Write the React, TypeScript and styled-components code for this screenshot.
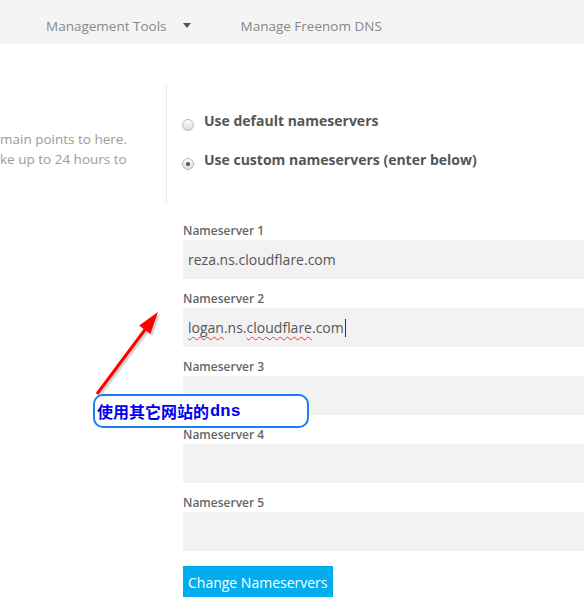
import React from "react";
import styled, { createGlobalStyle } from "styled-components";

const Global = createGlobalStyle`
  html, body { margin: 0; padding: 0; background: #fff; overflow: hidden; }
  body { font-family: "Open Sans", "Liberation Sans", sans-serif; }
`;

const Page = styled.div`
  position: relative;
  width: 584px;
  height: 597px;
  overflow: hidden;
`;

const NavBar = styled.nav`
  height: 44px;
  box-sizing: border-box;
  padding: 7px 0 0 46px;
  background: #f4f4f4;
  display: flex;
  align-items: center;
  font-size: 13.5px;
  color: #888;
`;

const NavItem = styled.span<{ $gap?: number }>`
  display: flex;
  align-items: center;
  margin-right: ${(p) => p.$gap ?? 0}px;
  white-space: nowrap;
`;

const Caret = styled.span`
  display: inline-block;
  margin-left: 16px;
  width: 0;
  height: 0;
  border-left: 4px solid transparent;
  border-right: 4px solid transparent;
  border-top: 5px solid #555;
`;

const Main = styled.div`
  padding-top: 41px;
`;

const TopRow = styled.div`
  display: flex;
`;

const Intro = styled.div`
  width: 167px;
  height: 118px;
  box-sizing: border-box;
  border-right: 1px solid #e8e8e8;
  padding-top: 44px;
  font-size: 13.5px;
  line-height: 20px;
  color: #9b9b9b;
  white-space: nowrap;
`;

const Options = styled.div`
  padding: 26px 0 0 15px;
  display: flex;
  flex-direction: column;
  gap: 19px;
`;

const RadioRow = styled.label`
  display: flex;
  align-items: flex-start;
  font-size: 14px;
  line-height: 20px;
  font-weight: 700;
  color: #555;
  white-space: nowrap;
`;

const Radio = styled.span<{ $checked?: boolean }>`
  position: relative;
  width: 12px;
  height: 12px;
  margin-top: 8px;
  margin-right: 10px;
  box-sizing: border-box;
  border-radius: 50%;
  border: 1px solid #b9b9b9;
  background: linear-gradient(#fdfdfd, #dcdcdc);
  &::after {
    content: "";
    display: ${(p) => (p.$checked ? "block" : "none")};
    position: absolute;
    left: 3px;
    top: 3px;
    width: 4px;
    height: 4px;
    border-radius: 50%;
    background: #555;
  }
`;

const Fields = styled.div`
  margin: 19px 0 0 183px;
  display: flex;
  flex-direction: column;
  gap: 11px;
`;

const Field = styled.div`
  display: flex;
  flex-direction: column;
`;

const Label = styled.div`
  font-size: 12px;
  line-height: 18px;
  font-weight: 600;
  color: #666;
`;

const InputBox = styled.div`
  width: 500px;
  height: 39px;
  box-sizing: border-box;
  background: #f2f2f2;
  padding-left: 5px;
  display: flex;
  align-items: center;
  font-size: 14px;
  color: #555;
  white-space: nowrap;
`;

const Misspelled = styled.span`
  text-decoration: underline wavy #e33;
  text-decoration-thickness: 1px;
  text-underline-offset: 3px;
`;

const Cursor = styled.span`
  display: inline-block;
  width: 1px;
  height: 18px;
  background: #333;
  margin-left: 1px;
`;

const Button = styled.button`
  margin: 15px 0 0 183px;
  height: 33px;
  padding: 0 5px;
  border: none;
  background: #00adef;
  color: #fff;
  font-family: "Open Sans", "Liberation Sans", sans-serif;
  font-size: 14px;
  display: block;
`;

const ArrowSvg = styled.svg`
  position: absolute;
  left: 0;
  top: 0;
  pointer-events: none;
`;

const Callout = styled.div`
  position: absolute;
  left: 93px;
  top: 394px;
  width: 216px;
  height: 34px;
  box-sizing: border-box;
  border: 2px solid #1a7ff0;
  border-radius: 10px;
  background: #fff;
  padding-left: 2px;
  display: flex;
  align-items: center;
  font-family: "Noto Sans CJK SC", "Liberation Serif", serif;
  font-weight: 700;
  font-size: 16px;
  color: #0000f0;
  white-space: nowrap;
`;

const Latin = styled.span`
  font-family: "Liberation Mono", "DejaVu Sans Mono", monospace;
  font-size: 17px;
  font-weight: 700;
  margin-left: 1px;
`;

const servers = ["reza.ns.cloudflare.com", "logan", "", "", ""];

export default function App() {
  return (
    <Page>
      <Global />
      <NavBar>
        <NavItem $gap={50}>
          Management Tools
          <Caret />
        </NavItem>
        <NavItem>Manage Freenom DNS</NavItem>
      </NavBar>
      <Main>
        <TopRow>
          <Intro>
            main points to here.
            <br />
            ke up to 24 hours to
          </Intro>
          <Options>
            <RadioRow>
              <Radio />
              Use default nameservers
            </RadioRow>
            <RadioRow>
              <Radio $checked />
              Use custom nameservers (enter below)
            </RadioRow>
          </Options>
        </TopRow>
        <Fields>
          {servers.map((s, i) => (
            <Field key={i}>
              <Label>Nameserver {i + 1}</Label>
              <InputBox>
                {i === 1 ? (
                  <>
                    <Misspelled>logan</Misspelled>.ns.<Misspelled>cloudflare</Misspelled>.com
                    <Cursor />
                  </>
                ) : (
                  s
                )}
              </InputBox>
            </Field>
          ))}
        </Fields>
        <Button>Change Nameservers</Button>
      </Main>
      <ArrowSvg width="584" height="597" viewBox="0 0 584 597">
        <g opacity="0.25" transform="translate(2 2)">
          <line x1="97" y1="394" x2="147" y2="327" stroke="#555" strokeWidth="3" />
          <polygon points="158,312 150.4,333.9 139.2,325.5" fill="#555" />
        </g>
        <line x1="97" y1="394" x2="147" y2="327" stroke="#f00" strokeWidth="3" />
        <polygon points="158,312 150.4,333.9 139.2,325.5" fill="#f00" />
      </ArrowSvg>
      <Callout>
        使用其它网站的<Latin>dns</Latin>
      </Callout>
    </Page>
  );
}
